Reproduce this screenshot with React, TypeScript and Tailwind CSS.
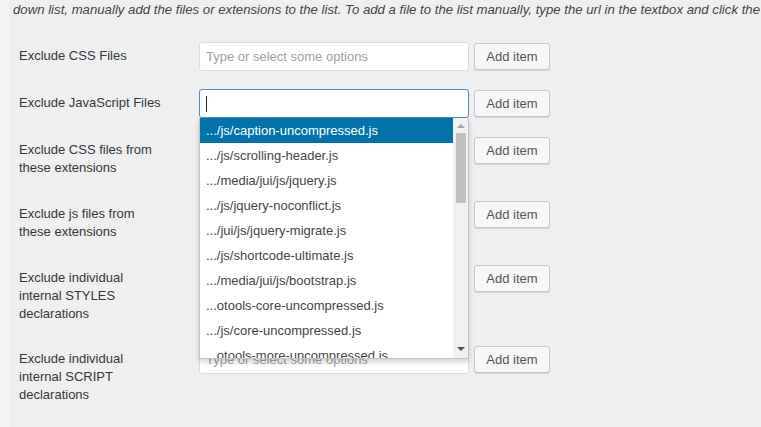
const files = [
  ".../js/caption-uncompressed.js",
  ".../js/scrolling-header.js",
  ".../media/jui/js/jquery.js",
  ".../js/jquery-noconflict.js",
  ".../jui/js/jquery-migrate.js",
  ".../js/shortcode-ultimate.js",
  ".../media/jui/js/bootstrap.js",
  "...otools-core-uncompressed.js",
  ".../js/core-uncompressed.js",
  "...otools-more-uncompressed.js",
];

const rows = [
  { label: ["Exclude CSS Files"], h: "h-[47px]" },
  { label: ["Exclude JavaScript Files"], h: "h-[47px]", open: true },
  { label: ["Exclude CSS files from", "these extensions"], h: "h-[64px]" },
  { label: ["Exclude js files from", "these extensions"], h: "h-[64px]" },
  { label: ["Exclude individual", "internal STYLES", "declarations"], h: "h-[81px]" },
  { label: ["Exclude individual", "internal SCRIPT", "declarations"], h: "h-[81px]" },
];

const Dropdown = () => (
  <div className="absolute left-0 top-[29px] z-10 flex h-[241px] w-[270px] border border-t-0 border-[#c4c4c4] bg-white shadow-[0_3px_5px_rgba(0,0,0,0.18)]">
    <ul className="h-full flex-1 overflow-hidden">
      {files.map((f, i) => (
        <li
          key={f}
          className={
            i === 0
              ? "h-[25px] whitespace-nowrap bg-[#0073aa] pl-[6px] text-[13px] leading-[25px] text-white"
              : "h-[25px] whitespace-nowrap pl-[6px] text-[13px] leading-[25px] text-[#444]"
          }
        >
          {f}
        </li>
      ))}
    </ul>
    <div className="flex h-full w-[15px] flex-col items-center bg-[#f1f1f1]">
      <div className="mt-[6px] h-0 w-0 border-x-[4px] border-b-[4px] border-x-transparent border-b-[#a3a3a3]" />
      <div className="mt-[5px] h-[70px] w-[10px] bg-[#c1c1c1]" />
      <div className="mt-auto mb-[7px] h-0 w-0 border-x-[4px] border-t-[4px] border-x-transparent border-t-[#505050]" />
    </div>
  </div>
);

export default function App() {
  return (
    <div className="min-h-[427px] w-full bg-[#f4f4f4] pl-[9px] font-['Liberation_Sans',Arial,sans-serif]">
      <div className="min-h-[427px] overflow-hidden bg-[#efefef]">
        <p className="h-[20px] whitespace-nowrap pl-[4px] pt-[1px] font-['Liberation_Sans_Narrow','Liberation_Sans',sans-serif] text-[13.2px] italic leading-[18px] text-[#444]">
          down list, manually add the files or extensions to the list. To add a file to the list manually, type the url in the textbox and click the 'Add item' button.
        </p>
        <div className="pt-[22px]">
          {rows.map((r, i) => (
            <div key={i} className={`flex items-start ${r.h}`}>
              <div className="w-[190px] pl-[10px] pt-[5px] text-[13px] leading-[18px] text-[#32373c]">
                {r.label.map((l) => (
                  <div key={l}>{l}</div>
                ))}
              </div>
              <div className="flex items-start gap-[5px]">
                <div className="relative h-[29px] w-[270px]">
                  {r.open ? (
                    <div className="flex h-full w-full items-center rounded-[3px] border border-[#4a8ec7] bg-white pl-[6px]">
                      <div className="h-[16px] w-px bg-[#222]" />
                    </div>
                  ) : (
                    <div className="flex h-full w-full items-center rounded-[3px] border border-[#dcdcdc] bg-white pl-[6px] text-[13px] text-[#a0a0a0]">
                      Type or select some options
                    </div>
                  )}
                  {r.open && <Dropdown />}
                </div>
                <button className="mt-[1px] h-[27px] w-[76px] rounded-[3px] border border-[#c8c8c8] bg-[#f7f7f7] text-[13px] text-[#555] shadow-[0_1px_0_#d4d4d4]">
                  Add item
                </button>
              </div>
            </div>
          ))}
        </div>
      </div>
    </div>
  );
}
